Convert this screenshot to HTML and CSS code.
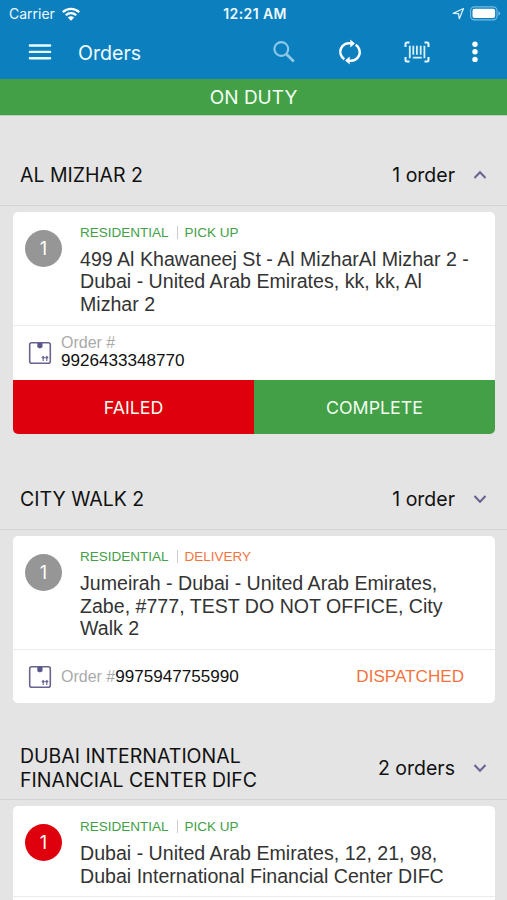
FILE: index.html
```html
<!DOCTYPE html>
<html lang="en">
<head>
  <meta charset="UTF-8" />
  <meta name="viewport" content="width=device-width, initial-scale=1.0" />
  <title>Orders</title>
  <link rel="stylesheet" href="styles.css">
</head>
<body>
  <!-- Shared icons -->
  <svg class="defs" width="0" height="0">
    <symbol id="box" viewBox="0 0 24 24">
      <rect x="1.7" y="1.7" width="20.6" height="20.6" rx="2" fill="none" stroke="#67648f" stroke-width="1.6" />
      <path d="M9.3 2h5.200v4.200l-2.600 1.200-2.600-1.200z" fill="#59568a" />
      <path d="M15.200 20v-4M18.800 20v-4M13.800 17l1.400-1.400 1.400 1.400M17.400 17l1.400-1.400 1.400 1.400" fill="none" stroke="#67648f" stroke-width="1.1" />
    </symbol>
    <symbol id="chevron" viewBox="0 0 14 10">
      <path d="M1.500 2l5.500 5.700L12.500 2" fill="none" stroke="#67648f" stroke-width="2" />
    </symbol>
  </svg>

  <header>
    <div class="status-bar">
      <div class="carrier">
        <span>Carrier</span>
        <svg width="20" height="14" viewBox="0 0 20 14">
          <path d="M1.800 5.200a11.800 11.800 0 0 1 16.400 0M4.800 8.300a7.400 7.400 0 0 1 10.400 0" fill="none" stroke="#fff" stroke-width="2.300" />
          <path d="M6.800 10.500a4.600 4.600 0 0 1 6.400 0L10 13.800z" fill="#fff" />
        </svg>
      </div>
      <div class="clock">12:21 AM</div>
      <div class="indicators">
        <svg width="13" height="13" viewBox="0 0 13 13">
          <path d="M1.200 6.300L11.500 1.500 7.300 11.700 6.500 6.700z" fill="none" stroke="#d7f1fb" stroke-width="1.300" stroke-linejoin="round" />
        </svg>
        <svg width="31" height="15" viewBox="0 0 31 15">
          <rect x=".6" y=".9" width="26.400" height="13" rx="3.800" fill="none" stroke="#75bde2" stroke-width="1.100" />
          <rect x="2.500" y="2.700" width="22.600" height="9.400" rx="2" fill="#fff" />
          <path d="M28.400 5.300q1.700.6 1.700 2.200t-1.700 2.200z" fill="#75bde2" />
        </svg>
      </div>
    </div>
    <div class="toolbar">
      <svg class="menu" width="24" height="18" viewBox="0 0 24 18">
        <path d="M1.900 2.500h20.200M1.900 8.900h20.200M1.900 15.200h20.200" stroke="#e9fbff" stroke-width="2.400" stroke-linecap="round" />
      </svg>
      <h1>Orders</h1>
      <div class="actions">
        <svg width="24" height="24" viewBox="0 0 24 24">
          <circle cx="9.300" cy="9" r="6.900" fill="none" stroke="#8dc9e8" stroke-width="2.100" />
          <path d="M14.500 14.200l7.300 7.200" stroke="#8dc9e8" stroke-width="2.800" />
        </svg>
        <svg width="24" height="26" viewBox="0 0 24 26">
          <path d="M6.300 20.200A8.700 8.700 0 0 1 13 4.400M17.700 5.800A8.700 8.700 0 0 1 11 21.600" fill="none" stroke="#fff" stroke-width="2.500" />
          <path d="M12.300.6l4.600 3.900-4.600 4zM11.700 17.500l-4.600 4 4.600 3.900z" fill="#fff" />
        </svg>
        <svg width="26" height="22" viewBox="0 0 26 22">
          <path d="M5.500 1.500H3q-1.500 0-1.500 1.500v3M20.500 1.500H23q1.500 0 1.500 1.500v3M5.500 20.500H3q-1.500 0-1.500-1.500v-3M20.500 20.500H23q1.500 0 1.500-1.500v-3" fill="none" stroke="#e9fbff" stroke-width="2" />
          <path d="M5.800 4.700v12.600M20.400 4.700v12.600M9.300 4.700v9M12.900 4.700v9M16.700 4.700v9M8.800 16.700h9" stroke="#d7f1fb" stroke-width="1.800" />
        </svg>
        <svg width="6" height="22" viewBox="0 0 6 22">
          <g fill="#fff">
            <circle cx="3" cy="3.200" r="2.700" />
            <circle cx="3" cy="10.800" r="2.700" />
            <circle cx="3" cy="18.400" r="2.700" />
          </g>
        </svg>
      </div>
    </div>
  </header>

  <div class="duty">ON DUTY</div>

  <main>
    <section>
      <div class="area">
        <h2>AL MIZHAR 2</h2>
        <span class="count">1 order</span>
        <svg class="chevron up"><use href="#chevron" /></svg>
      </div>
      <div class="card">
        <div class="stop">
          <div class="number">1</div>
          <div class="details">
            <div class="tags"><span>RESIDENTIAL</span><i></i><span>PICK UP</span></div>
            <p>499 Al Khawaneej St - Al MizharAl Mizhar 2 -<br>Dubai - United Arab Emirates, kk, kk, Al<br>Mizhar 2</p>
          </div>
        </div>
        <div class="order">
          <svg class="box"><use href="#box" /></svg>
          <div class="order-id stacked"><span>Order #</span><b>9926433348770</b></div>
        </div>
        <div class="buttons">
          <button class="failed">FAILED</button>
          <button class="complete">COMPLETE</button>
        </div>
      </div>
    </section>

    <section>
      <div class="area">
        <h2>CITY WALK 2</h2>
        <span class="count">1 order</span>
        <svg class="chevron"><use href="#chevron" /></svg>
      </div>
      <div class="card">
        <div class="stop">
          <div class="number">1</div>
          <div class="details">
            <div class="tags"><span>RESIDENTIAL</span><i></i><span class="delivery">DELIVERY</span></div>
            <p>Jumeirah - Dubai - United Arab Emirates,<br>Zabe, #777, TEST DO NOT OFFICE, City<br>Walk 2</p>
          </div>
        </div>
        <div class="order short">
          <svg class="box"><use href="#box" /></svg>
          <div class="order-id"><span>Order #</span><b>9975947755990</b></div>
          <div class="state">DISPATCHED</div>
        </div>
      </div>
    </section>

    <section>
      <div class="area tall">
        <h2>DUBAI INTERNATIONAL<br>FINANCIAL CENTER DIFC</h2>
        <span class="count">2 orders</span>
        <svg class="chevron"><use href="#chevron" /></svg>
      </div>
      <div class="card">
        <div class="stop">
          <div class="number urgent">1</div>
          <div class="details">
            <div class="tags"><span>RESIDENTIAL</span><i></i><span>PICK UP</span></div>
            <p>Dubai - United Arab Emirates, 12, 21, 98,<br>Dubai International Financial Center DIFC</p>
          </div>
        </div>
        <div class="order"></div>
      </div>
    </section>
  </main>
</body>
</html>
```
FILE: styles.css
```css
* {
  box-sizing: border-box;
}

body {
  display: flex;
  flex-direction: column;
  margin: 0;
  height: 100vh;
  background: #e4e4e4;
  color: #111;
  font-family: Inter, "Liberation Sans", sans-serif;
}

svg {
  display: block;
  flex: none;
}

.defs {
  display: none;
}

header {
  flex: none;
  height: 79px;
  background: #0c7fbe;
  color: #eefaff;
}

.status-bar {
  display: grid;
  grid-template-columns: 1fr auto 1fr;
  align-items: center;
  height: 27px;
  padding: 0 6px 0 9px;
  font-size: 14px;
}

.carrier {
  display: flex;
  align-items: center;
  gap: 6px;
}

.clock {
  font-size: 14px;
  font-weight: 600;
  letter-spacing: 0.4px;
}

.indicators {
  display: flex;
  align-items: center;
  justify-content: flex-end;
  gap: 5px;
}

.toolbar {
  display: flex;
  align-items: center;
  height: 50px;
  padding: 0 29px 0 28px;
}

h1 {
  margin: 2px 0 0 26px;
  font-size: 19.6px;
  font-weight: 400;
}

.actions {
  display: flex;
  align-items: center;
  margin-left: auto;
}

.actions svg + svg {
  margin-left: 42px;
}

.duty {
  flex: none;
  height: 37px;
  line-height: 37px;
  background: #43a047;
  border-bottom: 1px solid #b4d4b5;
  color: #f2fff2;
  font-size: 19px;
  text-align: center;
}

main {
  flex: 1;
  min-height: 0;
  overflow: hidden;
}

.area {
  display: flex;
  align-items: center;
  height: 90px;
  padding: 28px 20px 0;
  border-bottom: 1px solid #d3d3d3;
}

.area.tall {
  height: 91px;
}

h2 {
  flex: 1;
  margin: 0;
  font-size: 19.5px;
  font-weight: 400;
  line-height: 24px;
}

.count {
  font-size: 19.5px;
}

.chevron {
  width: 14px;
  height: 10px;
  margin-left: 18px;
}

.chevron.up {
  transform: rotate(180deg);
}

.card {
  margin: 6px 12px 6px 13px;
  overflow: hidden;
  border-radius: 5px;
  background: #fff;
  font-family: "Liberation Sans", Arial, sans-serif;
}

.stop {
  display: flex;
  padding: 11px 12px 10px;
  border-bottom: 1px solid #ebebeb;
}

.area.tall + .card .stop {
  padding-bottom: 9px;
}

.number {
  flex: none;
  width: 37px;
  height: 37px;
  margin-top: 7px;
  border-radius: 50%;
  background: #969696;
  color: #fff;
  font: 18px/37px Inter, sans-serif;
  text-align: center;
}

.number.urgent {
  background: #df000d;
}

.details {
  margin-left: 18px;
}

.tags {
  display: flex;
  align-items: center;
  height: 18px;
  color: #43a047;
  font-size: 13.5px;
}

.tags i {
  width: 1px;
  height: 13px;
  margin: 0 7px 0 8px;
  background: #ccc;
}

.tags .delivery {
  color: #f4733d;
}

p {
  margin: 7px 0 0;
  color: #333;
  font-size: 19.6px;
  line-height: 22.4px;
  white-space: nowrap;
}

.order {
  display: flex;
  align-items: center;
  height: 54px;
  padding: 0 31px 0 15px;
}

.order.short {
  height: 53px;
}

.box {
  width: 24px;
  height: 24px;
}

.order-id {
  display: flex;
  align-items: baseline;
  margin-left: 9px;
  font-size: 17.1px;
  line-height: 18px;
}

.order-id.stacked {
  flex-direction: column;
  margin-top: -2px;
}

.order-id span {
  color: #aaa;
  font-size: 16px;
}

.order-id b {
  font-weight: 400;
}

.state {
  margin-left: auto;
  color: #f4733d;
  font-size: 17.1px;
}

.buttons {
  display: flex;
}

.buttons button {
  flex: 1;
  height: 54px;
  padding: 0;
  border: 0;
  color: #f2fff2;
  font: 17.8px Inter, sans-serif;
}

.failed {
  background: #df000d;
}

.complete {
  background: #43a047;
}
```
